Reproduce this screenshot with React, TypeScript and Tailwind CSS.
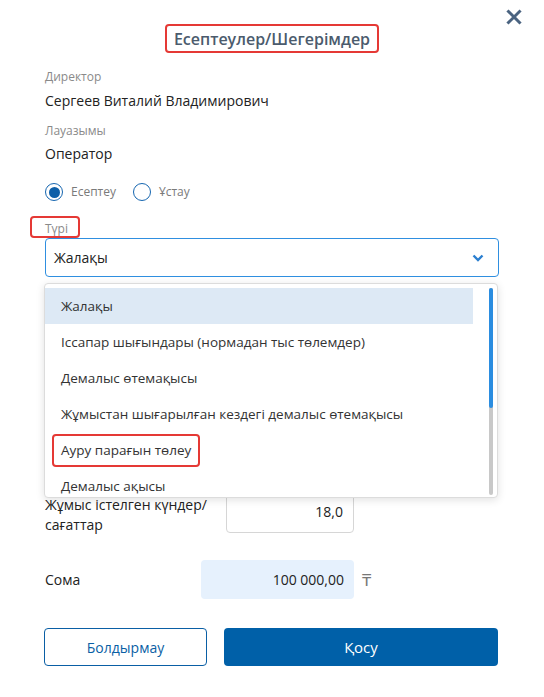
import { useState } from 'react';

const TYPES = [
  'Жалақы',
  'Іссапар шығындары (нормадан тыс төлемдер)',
  'Демалыс өтемақысы',
  'Жұмыстан шығарылған кездегі демалыс өтемақысы',
  'Ауру парағын төлеу',
  'Демалыс ақысы',
];

function Radio({ checked, label }: { checked: boolean; label: string }) {
  return (
    <label className="flex items-center gap-[8px] cursor-pointer">
      <span className="w-[18px] h-[18px] rounded-full border-[1.5px] border-[#1666b0] flex items-center justify-center">
        {checked && <span className="w-[11px] h-[11px] rounded-full bg-[#0e5fa8]" />}
      </span>
      <span className="text-[12px] leading-4 text-[#7a7a7a]">{label}</span>
    </label>
  );
}

export default function App() {
  const [kind, setKind] = useState('Жалақы');

  return (
    <div
      className="relative w-[544px] h-[697px] bg-white px-[45px] overflow-hidden"
      style={{ fontFamily: '"Open Sans", "Noto Sans", sans-serif' }}
    >
      {/* Close */}
      <button className="absolute top-[9px] right-[22px] w-[16px] h-[16px]">
        <svg width="16" height="16" viewBox="0 0 16 16" fill="none" stroke="#4a6380" strokeWidth="3" strokeLinecap="square">
          <path d="M2.5 2.5 13.5 13.5M13.5 2.5 2.5 13.5" />
        </svg>
      </button>

      {/* Title */}
      <div className="pt-[24px] flex justify-center">
        <h1 className="h-[29px] px-[7px] flex items-center border-2 border-[#e53935] rounded-[4px] text-[16px] font-semibold text-[#4b5b6d]">
          Есептеулер/Шегерімдер
        </h1>
      </div>

      {/* Info */}
      <p className="mt-[16px] text-[12px] leading-4 text-[#8a8a8a]">Директор</p>
      <p className="mt-[6px] text-[14px] leading-5 text-[#222]">Сергеев Виталий Владимирович</p>
      <p className="mt-[12px] text-[12px] leading-4 text-[#8a8a8a]">Лауазымы</p>
      <p className="mt-[5px] text-[14px] leading-5 text-[#222]">Оператор</p>

      {/* Radios */}
      <div className="mt-[19px] flex items-center gap-[17px]">
        <Radio checked label="Есептеу" />
        <Radio checked={false} label="Ұстау" />
      </div>

      {/* Type select */}
      <div className="relative mt-[20px]">
        <span className="absolute -left-[15px] -top-[5px] w-[50px] h-[22px] border-2 border-[#e53935] rounded-[4px]" />
        <p className="text-[12px] leading-4 text-[#8a8a8a]">Түрі</p>
      </div>
      <div className="mt-px h-[39px] border border-[#2f8fe0] rounded-[4px] flex items-center justify-between pl-[8px] pr-[14px]">
        <span className="text-[14px] text-[#222]">{kind}</span>
        <svg width="12" height="8" viewBox="0 0 12 8" fill="none" stroke="#2b7fd0" strokeWidth="2.4" strokeLinejoin="miter">
          <path d="M1.5 1.5 6 6l4.5-4.5" />
        </svg>
      </div>

      {/* Dropdown list over the form */}
      <div className="absolute top-[283px] left-[44px] w-[454px] h-[215px] bg-white border border-[#dcdcdc] rounded-[4px] shadow-[0_2px_8px_rgba(0,0,0,0.12)] pt-[4px] z-10">
        <div className="flex">
          <ul className="flex-1">
            {TYPES.map((t) => (
              <li
                key={t}
                onClick={() => setKind(t)}
                className={`h-[36px] flex items-center px-[16px] text-[13.5px] text-[#333] cursor-pointer ${
                  t === kind ? 'bg-[#dde9f5]' : ''
                }`}
              >
                {t === 'Ауру парағын төлеу' ? (
                  <span className="-mx-[9px] px-[7px] h-[33px] flex items-center border-2 border-[#e53935] rounded-[4px]">
                    {t}
                  </span>
                ) : (
                  t
                )}
              </li>
            ))}
          </ul>
          <div className="w-[4px] h-[207px] mr-[4px] ml-[16px] rounded-full bg-[#c8c8c8] flex flex-col">
            <div className="h-[120px] rounded-full bg-[#2b8de0]" />
          </div>
        </div>
      </div>

      {/* Worked days */}
      <div className="mt-[213px] flex items-start">
        <p className="w-[170px] pt-[5px] text-[14px] leading-5 text-[#222]">Жұмыс істелген күндер/ сағаттар</p>
        <div className="ml-[11px] w-[128px] h-[43px] border border-[#d6d6d6] rounded-[4px] flex items-center justify-end px-[10px] text-[14px] text-[#222]">
          18,0
        </div>
      </div>

      {/* Sum */}
      <div className="mt-[25px] flex items-center">
        <p className="w-[156px] text-[14px] text-[#222]">Сома</p>
        <div className="w-[153px] h-[39px] bg-[#e6f1fd] rounded-[4px] flex items-center justify-end px-[10px] text-[14px] text-[#222]">
          100 000,00
        </div>
        <span className="ml-[8px] text-[17px] text-[#777]">₸</span>
      </div>

      {/* Actions */}
      <div className="mt-[29px] -ml-px flex gap-[17px]">
        <button className="w-[163px] h-[38px] border border-[#0a5fa5] rounded-[4px] text-[14px] text-[#0a5fa5]">
          Болдырмау
        </button>
        <button className="w-[274px] h-[38px] bg-[#0060a8] rounded-[4px] text-[15px] text-white">
          Қосу
        </button>
      </div>
    </div>
  );
}
